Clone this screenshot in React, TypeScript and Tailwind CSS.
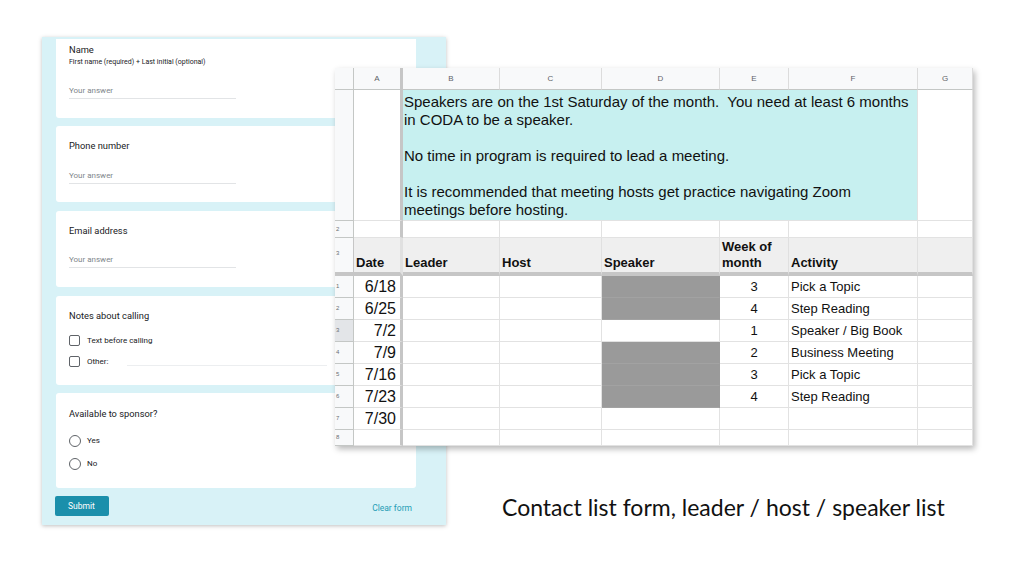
import React from "react";

const COLS = "grid-cols-[19px_49px_97px_102px_118px_69px_129px_55px]";

function Checkbox() {
  return <div className="w-[11px] h-[11px] rounded-[2px] border-[1.5px] border-[#5f6368] shrink-0" />;
}
function Radio() {
  return <div className="w-[12px] h-[12px] rounded-full border-[1.5px] border-[#5f6368] shrink-0" />;
}

function Answer() {
  return (
    <div className="w-[167px] border-b border-[#e2e4e6] pb-[2px] text-[8px] leading-[10px] text-[#80868b]">
      Your answer
    </div>
  );
}

function Form() {
  return (
    <div
      className="w-[404px] h-[488px] bg-[#d8f2f7] shadow-[0_1px_4px_rgba(0,0,0,0.25)] pl-[14px] pr-[30px] pt-[2px] flex flex-col text-[#202124]"
      style={{ fontFamily: "Roboto, 'Noto Sans', sans-serif" }}
    >
      <div className="h-[79px] bg-white rounded-b-[3px] pl-[13px] pt-[4px]">
        <div className="text-[9.3px] leading-[13px]">Name</div>
        <div className="text-[7px] leading-[9px] mt-[2px]">First name (required) + Last initial (optional)</div>
        <div className="mt-[19px]">
          <Answer />
        </div>
      </div>
      <div className="h-[76px] mt-[8px] bg-white rounded-[3px] pl-[13px] pt-[13px]">
        <div className="text-[9.3px] leading-[13px]">Phone number</div>
        <div className="mt-[19px]">
          <Answer />
        </div>
      </div>
      <div className="h-[76px] mt-[9px] bg-white rounded-[3px] pl-[13px] pt-[13px]">
        <div className="text-[9.3px] leading-[13px]">Email address</div>
        <div className="mt-[18px]">
          <Answer />
        </div>
      </div>
      <div className="h-[89px] mt-[9px] bg-white rounded-[3px] pl-[13px] pt-[13px]">
        <div className="text-[9.3px] leading-[13px]">Notes about calling</div>
        <div className="mt-[13px] flex items-center gap-[7px] h-[11px]">
          <Checkbox />
          <span className="text-[8px]">Text before calling</span>
        </div>
        <div className="mt-[10px] flex items-center gap-[7px] h-[11px]">
          <Checkbox />
          <span className="text-[8px]">Other:</span>
          <div className="ml-[12px] mt-[8px] w-[200px] border-b border-[#eceef0]" />
        </div>
      </div>
      <div className="h-[95px] mt-[8px] bg-white rounded-[3px] pl-[13px] pt-[14px]">
        <div className="text-[9.3px] leading-[13px]">Available to sponsor?</div>
        <div className="mt-[15px] flex items-center gap-[6px] h-[12px]">
          <Radio />
          <span className="text-[8px]">Yes</span>
        </div>
        <div className="mt-[11px] flex items-center gap-[6px] h-[12px]">
          <Radio />
          <span className="text-[8px]">No</span>
        </div>
      </div>
      <div className="mt-[8px] flex items-center justify-between -ml-px pr-[4px]">
        <div className="w-[54px] h-[20px] rounded-[2px] bg-[#1b8fab] text-white text-[8.5px] flex items-center pl-[13px]">
          Submit
        </div>
        <div className="text-[8.5px] text-[#1f9db5] mt-[4px]">Clear form</div>
      </div>
    </div>
  );
}

const rows = [
  { d: "6/18", w: "3", a: "Pick a Topic", g: true },
  { d: "6/25", w: "4", a: "Step Reading", g: true },
  { d: "7/2", w: "1", a: "Speaker / Big Book", g: false },
  { d: "7/9", w: "2", a: "Business Meeting", g: true },
  { d: "7/16", w: "3", a: "Pick a Topic", g: true },
  { d: "7/23", w: "4", a: "Step Reading", g: true },
  { d: "7/30", w: "", a: "", g: false },
];

function RowHdr({ n, h, sel }: { n: string; h: string; sel?: boolean }) {
  return (
    <div
      className={`${h} border-r border-b border-[#c4c7c5] ${sel ? "bg-[#e3e5e8]" : "bg-[#f8f9fa]"} flex items-center pl-[1px] text-[6px] text-[#6b6f73]`}
    >
      <span>{n}</span>
    </div>
  );
}

function Sheet() {
  const cell = "border-r border-b border-[#e2e2e2]";
  const freezeCol = "border-r-[3px] border-r-[#c6c6c6]";
  return (
    <div
      className="absolute left-[335px] top-[68px] w-[638px] h-[378px] bg-white shadow-[2px_3px_6px_rgba(0,0,0,0.28)] overflow-hidden text-black"
      style={{ fontFamily: "'Liberation Sans', Arial, sans-serif" }}
    >
      <div className={`grid ${COLS}`}>
        <div className="h-[22px] bg-[#f8f9fa] border-r border-b border-[#c4c7c5]" />
        {["A", "B", "C", "D", "E", "F", "G"].map((c, i) => (
          <div
            key={c}
            className={`h-[22px] bg-[#f8f9fa] border-b border-[#c4c7c5] ${i === 0 ? "border-r-[3px] border-r-[#c6c6c6]" : "border-r border-r-[#dcdcdc]"} flex items-center justify-center text-[8px] text-[#5f6368]`}
          >
            {c}
          </div>
        ))}

        <RowHdr n="" h="h-[131px]" />
        <div className={`h-[131px] ${cell} ${freezeCol}`} />
        <div className="col-span-5 h-[131px] bg-[#c7f0f0] border-r border-b border-[#e2e2e2] pl-[1px] pt-[3px] text-[15px] leading-[18px] whitespace-pre text-[#111]">
          {"Speakers are on the 1st Saturday of the month.  You need at least 6 months\nin CODA to be a speaker.\n\nNo time in program is required to lead a meeting.\n\nIt is recommended that meeting hosts get practice navigating Zoom\nmeetings before hosting."}
        </div>
        <div className={`h-[131px] ${cell}`} />

        <RowHdr n="2" h="h-[17px]" />
        <div className={`h-[17px] ${cell} ${freezeCol}`} />
        {[0, 1, 2, 3, 4, 5].map((i) => (
          <div key={i} className={`h-[17px] ${cell}`} />
        ))}

        <div className="h-[38px] border-r border-b-[4px] border-[#c6c6c6] bg-[#f8f9fa] flex items-center pl-[1px] text-[6px] text-[#6b6f73]">
          <span className="-mt-[4px]">3</span>
        </div>
        {["Date", "Leader", "Host", "Speaker", "Week of\nmonth", "Activity", ""].map((t, i) => (
          <div
            key={i}
            className={`h-[38px] bg-[#efefef] border-r border-r-[#e0e0e0] border-b-[4px] border-b-[#c6c6c6] ${i === 0 ? "border-r-[3px] border-r-[#c6c6c6]" : ""} flex items-end pl-[2px] pb-[1px] text-[13px] leading-[16px] font-bold whitespace-pre text-[#111]`}
          >
            {t}
          </div>
        ))}

        {rows.map((r, i) => (
          <React.Fragment key={i}>
            <RowHdr n={String(i + 1)} h="h-[22px]" sel={i === 2} />
            <div className={`h-[22px] ${cell} ${freezeCol} flex items-center justify-end pr-[4px] text-[16px] text-[#111]`}>
              {r.d}
            </div>
            <div className={`h-[22px] ${cell}`} />
            <div className={`h-[22px] ${cell}`} />
            <div
              className={`h-[22px] border-r ${r.g ? "bg-[#9a9a9a] border-[#9a9a9a] border-b border-b-[#a2a2a2]" : "border-[#e2e2e2] border-b"}`}
            />
            <div className={`h-[22px] ${cell} flex items-center justify-center text-[13px] text-[#111]`}>{r.w}</div>
            <div className={`h-[22px] ${cell} flex items-center pl-[2px] text-[13px] text-[#111]`}>{r.a}</div>
            <div className={`h-[22px] ${cell}`} />
          </React.Fragment>
        ))}

        <RowHdr n="8" h="h-[16px]" />
        <div className={`h-[16px] ${cell} ${freezeCol}`} />
        {[0, 1, 2, 3, 4, 5].map((i) => (
          <div key={i} className={`h-[16px] ${cell}`} />
        ))}
      </div>
    </div>
  );
}

export default function App() {
  return (
    <div className="relative w-[1024px] h-[576px] bg-white overflow-hidden flex items-start">
      <div className="ml-[42px] mt-[37px]">
        <Form />
      </div>
      <div
        className="ml-[56px] mt-[492px] text-[23px] leading-[30px] text-[#111] whitespace-nowrap"
        style={{ fontFamily: "Lato, 'Noto Sans', sans-serif" }}
      >
        Contact list form, leader / host / speaker list
      </div>
      <Sheet />
    </div>
  );
}
